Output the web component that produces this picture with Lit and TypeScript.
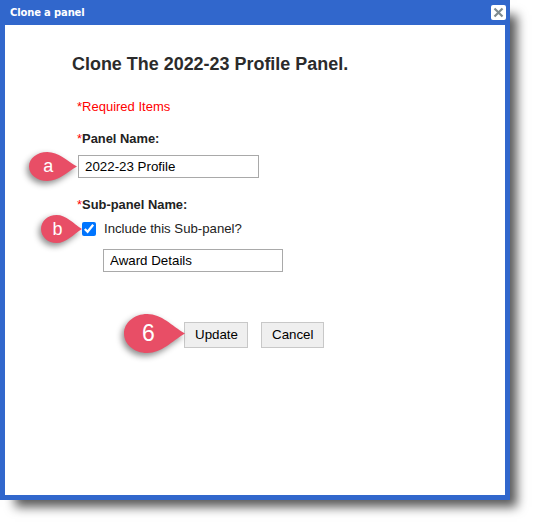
import { LitElement, css, html, svg } from "lit";
import { customElement, property } from "lit/decorators.js";

// teardrop marker pointing right, the number/letter sits over the round part
@customElement("call-out")
class CallOut extends LitElement {
  static styles = css`
    :host {
      display: block;
      position: absolute;
    }
    svg {
      display: block;
      overflow: visible;
      filter: drop-shadow(-2px 3px 3px rgba(0, 0, 0, 0.45));
    }
    span {
      position: absolute;
      top: 0;
      bottom: 0;
      left: 0;
      width: 80%;
      display: flex;
      align-items: center;
      justify-content: center;
      color: #fff;
      font-family: "Liberation Sans", Arial, sans-serif;
    }
  `;

  @property({ type: Number }) w = 48;
  @property({ type: Number }) h = 29;
  @property({ type: Number }) size = 18;
  @property() label = "";

  render() {
    const { w, h } = this;
    const d = `M${w} ${h / 2}C${w * 0.78} ${h * 0.3} ${w * 0.62} 0 ${w * 0.38} 0C${w * 0.17} 0 0 ${h * 0.22} 0 ${h / 2}C0 ${h * 0.78} ${w * 0.17} ${h} ${w * 0.38} ${h}C${w * 0.62} ${h} ${w * 0.78} ${h * 0.7} ${w} ${h / 2}Z`;
    return html`
      <svg width=${w} height=${h} viewBox="0 0 ${w} ${h}">
        ${svg`<path d=${d} fill="#e84e66"></path>`}
      </svg>
      <span style="font-size:${this.size}px">${this.label}</span>
    `;
  }
}

@customElement("app-root")
export class AppRoot extends LitElement {
  static styles = css`
    :host {
      display: block;
      position: relative;
      width: 533px;
      height: 523px;
      overflow: hidden;
      background: #fff;
      font-family: "Liberation Sans", Arial, sans-serif;
      color: #222;
    }

    .panel {
      display: flex;
      flex-direction: column;
      width: 510px;
      height: 500px;
      box-sizing: border-box;
      padding: 0 5px 5px;
      background: #3167cc;
      box-shadow: 11px 11px 10px -4px rgba(0, 0, 0, 0.65);
    }

    .titlebar {
      display: flex;
      align-items: center;
      justify-content: space-between;
      height: 25px;
      flex: none;
      padding: 0 0 0 5px;
      color: #fff;
      font: bold 10px "DejaVu Sans", Verdana, sans-serif;
      letter-spacing: -0.15px;
    }

    .close {
      display: flex;
      width: 15px;
      height: 15px;
      margin: 0 -1px 0 0;
      background: #fff;
      border-radius: 2px;
    }

    .body {
      flex: 1;
      background: #fff;
      padding: 29px 0 0 67px;
    }

    h1 {
      margin: 0;
      font-size: 17.95px;
      line-height: 20px;
      font-weight: bold;
      color: #2b2b2b;
    }

    .required {
      margin: 25px 0 0 5px;
      font-size: 13px;
      line-height: 16px;
      color: #f00;
    }

    .label {
      margin-left: 5px;
      font-size: 12.9px;
      line-height: 16px;
      font-weight: bold;
      color: #222;
    }

    .label i {
      font-style: normal;
      font-weight: normal;
      color: #f00;
    }

    .name {
      margin-top: 16px;
    }

    input[type="text"] {
      display: block;
      box-sizing: border-box;
      height: 23px;
      padding: 1px 6px;
      border: 1px solid #a9a9a9;
      font: 13.33px "Liberation Sans", Arial, sans-serif;
      color: #000;
      background: #fff;
    }

    .field-a {
      width: 181px;
      margin: 8px 0 0 6px;
    }

    .sub {
      margin-top: 19px;
    }

    .check {
      display: flex;
      align-items: center;
      gap: 8px;
      margin: 7px 0 0 10px;
      font-size: 13.2px;
      line-height: 18px;
      color: #222;
    }

    .check input {
      width: 14px;
      height: 14px;
      margin: 0;
    }

    .field-b {
      width: 180px;
      margin: 11px 0 0 31px;
    }

    .actions {
      display: flex;
      gap: 13px;
      margin: 50px 0 0 112px;
    }

    button {
      height: 26px;
      margin: 0;
      padding: 0 10px 1px;
      background: #efefef;
      border: 1px solid #c8c8c8;
      font: 13.33px "Liberation Sans", Arial, sans-serif;
      color: #000;
    }

    .update {
      width: 64px;
    }

    .cancel {
      width: 63px;
    }

    .mark-a {
      left: 29px;
      top: 152px;
    }

    .mark-b {
      left: 41px;
      top: 215px;
    }

    .mark-6 {
      left: 124px;
      top: 314px;
    }
  `;

  render() {
    return html`
      <div class="panel">
        <div class="titlebar">
          <span>Clone a panel</span>
          <span class="close">
            <svg width="15" height="15" viewBox="0 0 15 15">
              <path d="M3.5 3.5l8 8M11.5 3.5l-8 8" stroke="#7f8b8f" stroke-width="2.2" fill="none"></path>
            </svg>
          </span>
        </div>
        <div class="body">
          <h1>Clone The 2022-23 Profile Panel.</h1>
          <div class="required">*Required Items</div>
          <div class="label name"><i>*</i>Panel Name:</div>
          <input class="field-a" type="text" .value=${"2022-23 Profile"} />
          <div class="label sub"><i>*</i>Sub-panel Name:</div>
          <label class="check">
            <input type="checkbox" checked />
            <span>Include this Sub-panel?</span>
          </label>
          <input class="field-b" type="text" .value=${"Award Details"} />
          <div class="actions">
            <button class="update">Update</button>
            <button class="cancel">Cancel</button>
          </div>
        </div>
      </div>
      <call-out class="mark-a" .w=${48} .h=${29} .size=${18} label="a"></call-out>
      <call-out class="mark-b" .w=${41} .h=${28} .size=${18} label="b"></call-out>
      <call-out class="mark-6" .w=${61} .h=${39} .size=${23} label="6"></call-out>
    `;
  }
}
